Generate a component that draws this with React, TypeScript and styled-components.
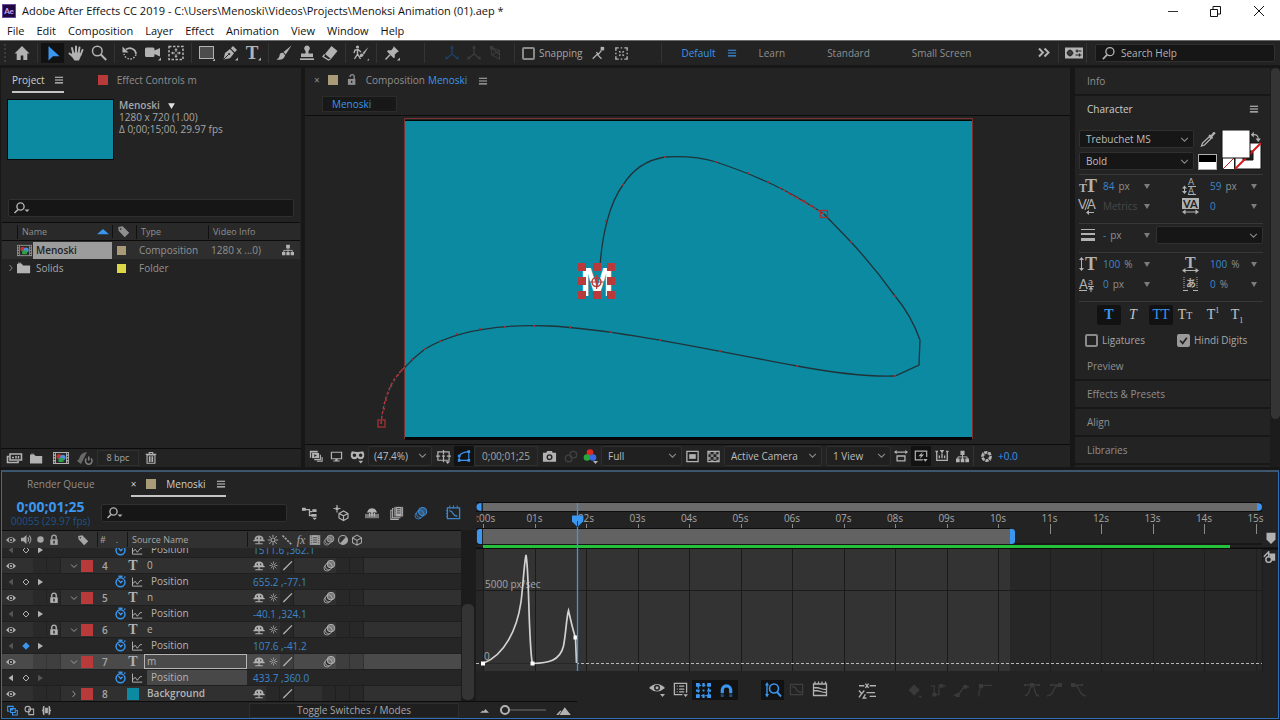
import React from "react";
import styled, { createGlobalStyle } from "styled-components";

const c = {
  panel: "#232323",
  gap: "#171717",
  field: "#161616",
  line: "#0c0c0c",
  border: "#303030",
  text: "#a6a6a6",
  bright: "#cdcdcd",
  dim: "#8f8f8f",
  icon: "#b2b2b2",
  blue: "#3a96ee",
  value: "#3c86cd",
  teal: "#0c8aa1",
  red: "#b93a3a",
  tan: "#a99b78",
};

const GlobalStyle = createGlobalStyle`
  * { box-sizing: border-box; }
  body { margin: 0; background: ${c.gap}; color: ${c.text}; font: 10px/14px "Open Sans", "Noto Sans", sans-serif; }
  button, input, select { font: inherit; color: inherit; margin: 0; padding: 0; border: 0; background: none; border-radius: 0; outline: 0; }
  button { white-space: nowrap; text-align: left; }
  h1, h2, p { margin: 0; font: inherit; white-space: nowrap; }
  table { border-spacing: 0; }
  th, td { padding: 0; font-weight: 400; text-align: left; }
  svg { display: block; flex: none; }
`;

/* ---------- icons ---------- */

const s = { fill: "none", stroke: "currentColor" } as const;
const flyout = <path d="M13 15.500h3v-3z" />;
const down = <path d="M10 13h5l-2.500 3z" />;

const icons: Record<string, React.ReactNode> = {
  home: <path d="M8 1 .5 8.500h2.200V15h4V10.500h2.600V15h4V8.500h2.200z" />,
  arrow: <path d="M3.500 1v14.500l4.500-4.300h6.500z" />,
  hand: (
    <>
      <path {...s} strokeWidth="2" strokeLinecap="round" d="M5.500 9 4 3M8 8V1.500M10.500 8.500 11.500 2.500M12.500 10 14.500 5M4.500 11 1.500 8.500" />
      <path d="M4.300 7.500h7.500l1.600 2.500-2.400 5.500H6.500L3 10.500z" />
    </>
  ),
  zoom: (
    <>
      <circle {...s} strokeWidth="1.500" cx="6.300" cy="6" r="4.800" />
      <path {...s} strokeWidth="2" d="m9.800 9.500 5.400 5.500" />
    </>
  ),
  rotate: (
    <>
      <path {...s} strokeWidth="1.700" d="M4 4.500A6.200 6.200 0 0 1 14 9" />
      <path {...s} strokeWidth="1.500" strokeDasharray="1.500 1.500" d="M14 9.500A6.200 6.200 0 0 1 2 9" />
      <path d="M.5 1.500v6h6z" />
    </>
  ),
  camera: (
    <>
      <path d="M0 4q0-1.500 1.500-1.500H8Q9.500 2.500 9.500 4v1.500L15 3v8.500L9.500 9v1.500Q9.500 12 8 12H1.500Q0 12 0 10.500z" />
      {flyout}
    </>
  ),
  behind: (
    <>
      <rect {...s} strokeWidth="1.500" strokeDasharray="2.500 1.500" x="1" y="1.500" width="14" height="13" />
      <path d="M8 3 6.200 5.200h3.600zM8 13l-1.800-2.200h3.600zM3 8l2.200-1.800v3.600zM13 8l-2.200-1.800v3.600z" />
      <path {...s} d="M8 4v3M8 9v3M4 8h3M9 8h3" />
    </>
  ),
  rect: (
    <>
      <rect x="0.500" y="1.500" width="14" height="12" fill="#4c4c4c" stroke="currentColor" />
      <path d="M13.500 16H16v-2.500z" />
    </>
  ),
  pen: (
    <>
      <path d="M1.500 14.500 3 8 8 4l4 4.300-4 4.900z" />
      <path d="m8.800 3.300 2.200-2.300 4 4-2.300 2.300z" />
      <path d="m1.500 14.500 5-5" stroke="#232323" />
      <circle cx="7.200" cy="9" r="1.100" fill="#232323" />
      {flyout}
    </>
  ),
  type: (
    <>
      <text x="7" y="13.500" textAnchor="middle" fontFamily="Liberation Serif" fontSize="19" fontWeight="700">T</text>
      {flyout}
    </>
  ),
  brush: (
    <>
      <path d="M15.500.5 7.500 7l2.200 2.500z" />
      <path d="M7 7.800Q3.500 7.500 3.500 11 3 13.500.5 14.500q7 1.500 8.700-4.300z" />
    </>
  ),
  stamp: (
    <>
      <path d="M8 .5a2.800 2.800 0 0 1 2 4.800Q9 6.500 9.500 8.500H14V12H2V8.500h4.500Q7 6.500 6 5.300A2.800 2.800 0 0 1 8 .5z" />
      <path d="M1 13.300h14v1.700H1z" />
    </>
  ),
  eraser: (
    <>
      <path d="m9.500 1 6 5-6.500 8L3 9z" />
      <path {...s} strokeWidth="1.300" d="m2.600 9.500-1.600 2L6.500 15l2-1" />
    </>
  ),
  roto: (
    <>
      <circle cx="4.500" cy="2" r="1.600" />
      <path {...s} strokeWidth="1.400" d="M4.500 4v5l-3 5M4.500 9l3 5M1 8l1-3 3-.5L8 7" />
      <path d="M15.500 2 9.500 8l1.500 1.600z" />
      <path d="M9 8.600Q6.500 9 6.600 12q3.900 0 4-2.300zM14 15.500h2v-2z" />
    </>
  ),
  pin: (
    <>
      <path d="m9.500 1 5.500 5.500-1.500.5-2.700 2.500v3.300L9.500 13 3 6.500 4 5.200h3.300L9.500 2.500z" />
      <path {...s} strokeWidth="1.500" d="m6 9.800-4.500 4.700" />
      {flyout}
    </>
  ),
  axis: (
    <>
      <path {...s} strokeWidth="1.300" d="M8 2v7l5 4M8 9l-5 4" />
      <path d="M8 0 6 3.500h4zM1 14.500l1-3.500 2.500 3zM15 14.500l-1-3.500-2.500 3z" />
    </>
  ),
  axisView: (
    <>
      <path {...s} strokeWidth="1.200" d="M3 2l9 8M3 2v8l9 5V5zM12 5 4 10" />
      <path d="M1 0h4v4H1z" />
    </>
  ),
  snapEdge: (
    <>
      <path {...s} strokeWidth="1.500" d="m2 14.500 5-5 5 5M6 7l2.500 2.500L12 5" />
      <path d="M11 1h4v4h-4z" />
    </>
  ),
  snapBox: (
    <path {...s} strokeWidth="1.500" d="M2 5V2h3M11 2h3v3M14 11v3h-3M5 14H2v-3M5.500 5.500 7 7M10.500 5.500 9 7M5.500 10.500 7 9M10.500 10.500 9 9M7.200 2h1.600M7.200 14h1.600M2 7.200v1.600M14 7.200v1.600" />
  ),
  menu: <path {...s} strokeWidth="1.800" d="M1.500 3.500h13M1.500 8h13M1.500 12.500h13" />,
  more: <path {...s} strokeWidth="2" d="m3 3.500 4 4-4 4M8.500 3.500l4 4-4 4" />,
  workspace: (
    <>
      <path d="M-1 2.500h18v11H-1z" />
      <circle cx="4" cy="8" r="2.200" fill="none" stroke="#232323" strokeWidth="1.500" />
      <path fill="none" stroke="#232323" strokeWidth="1.200" d="M4 4.500v7M.5 8h7M9.500 6h6M9.500 10h6M11 4.500v3M13.500 8.500v3" />
    </>
  ),
  help: (
    <>
      <circle {...s} strokeWidth="1.400" cx="9.500" cy="6" r="4.300" />
      <path {...s} strokeWidth="1.700" d="M6.300 9.500 2 14" />
    </>
  ),
  find: (
    <>
      <circle {...s} strokeWidth="1.400" cx="6.500" cy="6.500" r="3.600" />
      <path {...s} strokeWidth="1.600" d="M4 9.500.5 13" />
      <path d="M10.500 9.500h5L13 12z" />
    </>
  ),
  lock: (
    <>
      <path d="M3 7h10v7.500H3z" />
      <path {...s} strokeWidth="1.800" d="M5 7V4.500a3 3 0 0 1 6 0V7" />
      <path d="M7 9h2v3.500H7z" fill="#2a2a2a" />
    </>
  ),
  unlock: (
    <>
      <path d="M2.500 6.500h10v8h-10z" />
      <path {...s} strokeWidth="1.800" d="M5.500 4V3.500a2.700 2.700 0 0 1 5.400 0v3" />
      <path d="M6.800 9h1.600v3H6.800z" fill="#232323" />
    </>
  ),
  tag: <path fillRule="evenodd" d="M1.500 2.500 7 1.500l8 8-5.500 5.500-7.500-8zM4.500 4a1 1 0 1 0 .1 2 1 1 0 0 0-.1-2z" />,
  sort: <path d="M0 11h16L8 4z" />,
  tick: <path {...s} strokeWidth="3" d="m2 8 4.500 5L14 3" />,
  tree: (
    <>
      <path d="M5.500 1h5v5h-5zM0 10.500h4.500V15H0zM5.800 10.500h4.400V15H5.800zM11.500 10.500H16V15h-4.500z" />
      <path {...s} strokeWidth="1.200" d="M8 6v5M2.300 11V8.500h11.400V11" />
    </>
  ),
  comp: (
    <>
      <path d="M0 2h16v12H0z" />
      <path d="M3 3h10v10H3z" fill="#2b2b2b" />
      <path {...s} stroke="#2b2b2b" strokeWidth="1.300" strokeDasharray="1.400 1.400" d="M1.500 3v10M14.500 3v10" />
      <circle cx="6" cy="6.500" r="2.500" fill="#c8322c" />
      <circle cx="9.800" cy="7.500" r="2.700" fill="#4d8fe0" />
      <path d="M5.500 8h5v4h-5z" fill="#2f9f4a" />
    </>
  ),
  folder: <path d="M0 3.500h5.500L7 5h8v9H0zM1 2h4v1H1z" />,
  interpret: (
    <>
      <path {...s} strokeWidth="1.600" d="M4 4h11.500v6H4zM3 6.500H1.500v6H12V11" />
      <path {...s} d="M6 7.500h2M10 6v2.500M12.500 6v2.500" strokeWidth="1.500" />
    </>
  ),
  power: (
    <>
      <path d="M2 9q1-6 8-7L8 6l-4 8L0 11z" opacity=".75" />
      <path {...s} strokeWidth="1.500" d="M9.500 8.500a3.300 3.300 0 1 0 4.500 0M11.800 6.500v4" />
    </>
  ),
  trash: <path {...s} strokeWidth="1.300" d="M3.500 4.500h9V14h-9zM2 3.800h12M6 3.500V1.700h4v1.800M6.200 6v6.500M8 6v6.500M9.800 6v6.500" />,
  previews: (
    <>
      <path d="M1 2h9v2H1zM1 2h1.500v8H1z" />
      <path d="M3.500 4.500h8v6h-8z" />
      <path d="m6 6 3 1.500L6 9z" fill="#232323" />
      <path {...s} strokeWidth="1.300" d="M13 6.500v5.700H6M15 9v5H9" />
    </>
  ),
  monitor: <path fillRule="evenodd" d="M1 2h14v9.500H1zM2.500 3.500V10h11V3.500zM6.500 11.500h3V13H12v1.300H4V13h2.500z" />,
  mask: (
    <>
      <path fillRule="evenodd" d="M2 2.500Q8 4 14 2.500q2 3 1 6Q14 11 11.500 11 9 11 8 9q-1 2-3.500 2T1 8.500q-1-3 1-6zM4.700 4.700a1.900 1.900 0 1 0 .1 3.800 1.900 1.900 0 0 0-.1-3.800zm6.600 0a1.900 1.900 0 1 0 .1 3.800 1.900 1.900 0 0 0-.1-3.800z" />
      <path d="M9 12.500h5l-2.500 3z" />
    </>
  ),
  grid: (
    <>
      <path {...s} strokeWidth="1.300" d="M2 3h12v9H2zM8 1v4.500M8 9v5M0 7.500h4.500M11.500 7.500H16M6.500 7.500h3M8 6v3" />
      {down}
    </>
  ),
  path: (
    <>
      <path {...s} strokeWidth="1.300" d="M2.500 13V8Q5 3.500 13.500 3v10z" />
      <path d="M1 11.500h3v3H1zM12 11.500h3v3h-3zM12 1.500h3v3h-3zM1 6.500h3v3H1z" />
    </>
  ),
  snapshot: <path fillRule="evenodd" d="M1 4h3.500l1-2h5l1 2H15v9.500H1zM8 5.500a3.200 3.200 0 1 0 .1 6.400A3.200 3.200 0 0 0 8 5.500zm0 1.500a1.700 1.700 0 1 1 0 3.400A1.700 1.700 0 0 1 8 7z" />,
  showShot: (
    <>
      <circle {...s} strokeWidth="1.500" cx="6" cy="10" r="3.500" />
      <circle {...s} strokeWidth="1.500" cx="11" cy="6" r="3.500" />
    </>
  ),
  rgb: (
    <>
      <circle cx="7" cy="4.500" r="3.300" fill="#dc2a22" />
      <circle cx="4" cy="9.500" r="3.300" fill="#27a83a" />
      <circle cx="10" cy="9.500" r="3.300" fill="#3a69e0" />
      {down}
    </>
  ),
  region: (
    <>
      <path {...s} strokeWidth="1.400" d="M2 2.500h12v11H2z" />
      <path d="M4.500 5.500h7v5h-7z" />
    </>
  ),
  checker: (
    <>
      <path {...s} strokeWidth="1.200" d="M2 2.500h12v11H2z" />
      <path d="M2 2.500h3v3H2zM8 2.500h3v3H8zM5 5.500h3v3H5zM11 5.500h3v3h-3zM2 8.500h3v3H2zM8 8.500h3v3H8zM5 11.500h3v2H5zM11 11.500h3v2h-3z" opacity=".7" />
    </>
  ),
  pixelAspect: (
    <>
      <path {...s} strokeWidth="1.500" d="M3.500 8h9v5.500h-9zM1.500 3.500h13" />
      <path d="M3 1v5L0 3.500zM13 1v5l3-2.500z" />
    </>
  ),
  fast: (
    <>
      <path {...s} strokeWidth="1.400" d="M10 12.500H1.500v-10h13V9" />
      <path d="M10 3 5 8.300h3L6.500 11.500l5-5.300h-3z" />
      <path d="M10.500 11.500h5l-2.500 3z" />
    </>
  ),
  timelineBtn: (
    <>
      <path {...s} strokeWidth="1.500" d="M2 3v10h12V3M5 7.500v3M8 5v5.500M11 7.500v3" />
      <path d="M5.500 1h5L8 5zM.5 2h3v1.500h-3zM12.500 2h3v1.500h-3z" />
    </>
  ),
  shutter: (
    <>
      <circle {...s} strokeWidth="3.300" strokeDasharray="4 1" cx="8" cy="8" r="5" />
      <path {...s} d="M3 3l3 4M13 3 9 5M13 13l-3-4" />
    </>
  ),
  swap: (
    <>
      <path {...s} strokeWidth="1.500" d="M4 5q7-1 7 6" />
      <path d="M5 1v7.500L1 5zM7.500 10h7L11 14.500z" />
    </>
  ),
  dropper: (
    <>
      <path d="M10 6 8.500 4.500l1-1L11 4l2.500-3q2-.5 2 1.500L12.500 5.500l.5 1.500-1 1z" />
      <path {...s} strokeWidth="1.300" d="M9.500 5.500 2.500 12l-1 3 3-1L11 7.500z" />
    </>
  ),
  flow: (
    <>
      <path {...s} strokeWidth="1.400" d="M0 5h7M4 5h4v7M8 7h3M8 11h3" />
      <path d="M0 3h4v3H0zM11 4.500h4.500v3H11zM10 9.500h5.500v3H10z" />
      <path d="M11 13.500h5L13.500 16z" />
    </>
  ),
  draft: (
    <>
      <path {...s} strokeWidth="1.200" d="M6 8.500 10.500 6l4.500 2.500V13l-4.500 2.500L6 13zM6 8.500l4.500 2.300L15 8.500M10.500 10.800V15M4 0v2M4 5.500v2M.5 3.500h2M5.500 3.500h2" />
      <circle cx="4" cy="3.700" r="1.700" />
    </>
  ),
  shy: (
    <>
      <path fillRule="evenodd" d="M2 7q.5-5 6-5t6 5v1h1.500v1.500H.5V8H2zM5 4.500h1.500V7H5zM9.500 4.500H11V7H9.500z" />
      <path d="M7.200 9h1.600v4H7.200zM3 12.300h10v1.500H3z" />
    </>
  ),
  shyMaster: (
    <>
      <path d="M3 6q1-3.500 5-3.500T13 6l1 1.500H2z" />
      <path d="M0 9h16v5H0z" opacity=".6" />
      <path d="M7 6h2v6H7zM4.500 8h1.500v4H4.500zM10 8h1.500v4H10z" />
    </>
  ),
  blend: (
    <>
      <path d="M5 1h10v11H5z" />
      <path {...s} strokeWidth="1.200" d="M4 3H3v10.500h9M2 5H1v10.300h9" />
      <path {...s} stroke="#2a2a2a" strokeDasharray="1.300 1" d="M6.500 1.500v10M13.500 1.500v10" />
      <path d="M8 3h4M8 5.500h4M8 8h4" stroke="#2a2a2a" />
    </>
  ),
  motion: (
    <>
      <circle {...s} cx="5" cy="11" r="3.800" />
      <circle {...s} cx="7" cy="9" r="4.200" fill="#2a2a2a" />
      <circle {...s} cx="9.800" cy="6.300" r="4.700" fill="currentColor" fillOpacity=".55" strokeWidth="1.200" />
    </>
  ),
  graph: (
    <>
      <path {...s} strokeWidth="1.400" d="M1.500 3h13v11.500h-13zM3.500 6q3 .5 4 3t4.500 3" />
      <path {...s} d="M4 .5v3M8 .5v3M12 .5v3M0 6h2M0 9h2M0 12h2" />
    </>
  ),
  eye: (
    <>
      <path d="M0 8Q8-1.500 16 8 8 17.500 0 8z" />
      <circle cx="8" cy="8" r="3.600" fill="#282828" />
      <circle cx="8" cy="8" r="1.800" />
    </>
  ),
  eyeDrop: (
    <>
      <path d="M0 7Q8-1 16 7 8 14 0 7z" />
      <circle cx="8" cy="6.800" r="3" fill="#232323" />
      <circle cx="8" cy="6.800" r="1.500" />
      <path d="M11 13h5l-2.500 3z" />
    </>
  ),
  audio: (
    <>
      <path d="M0 5.500h3.500L8 1.500v13l-4.500-4H0z" />
      <path {...s} strokeWidth="1.500" d="M10 5q2.500 3 0 6M12 2.500q5 5.500 0 11" />
    </>
  ),
  solo: <circle cx="8" cy="8" r="4.700" />,
  sun: (
    <>
      <circle {...s} strokeWidth="1.500" cx="8" cy="8" r="2.700" />
      <path {...s} strokeWidth="1.400" d="M8 1v3M8 12v3M1 8h3M12 8h3M3 3l2 2M11 11l2 2M13 3l-2 2M5 11l-2 2" />
    </>
  ),
  quality: <path {...s} strokeWidth="2.200" strokeDasharray="3 1.500" d="m2 2 12 12" />,
  slash: <path {...s} strokeWidth="2" d="M2 14.500 14.500 2" />,
  fx: <text x="8" y="13" textAnchor="middle" fontFamily="Liberation Serif" fontStyle="italic" fontSize="16">fx</text>,
  film: (
    <>
      <path d="M1 1.500h14v13H1z" />
      <path {...s} stroke="#303030" strokeDasharray="1.500 1.500" d="M3 2v12M13 2v12" />
      <path d="M5 5h6M5 8h6M5 11h6" stroke="#303030" />
    </>
  ),
  adjust: (
    <>
      <circle {...s} strokeWidth="1.500" cx="8" cy="8" r="6" />
      <path d="M12 3.500A6 6 0 0 1 4 12.500z" />
    </>
  ),
  cube: <path {...s} strokeWidth="1.400" d="M2 5l6-3.500L14 5v6.500L8 15l-6-3.500zM2 5l6 3.500L14 5M8 8.500V15" />,
  watch: (
    <>
      <circle {...s} strokeWidth="1.800" cx="8" cy="9" r="5.500" />
      <path {...s} strokeWidth="1.700" d="m5.500 6.500 3 3 2-2.500M5.500 1.500h5M12.500 3.500l1.500-1.500" />
    </>
  ),
  plot: <path {...s} strokeWidth="1.300" d="M2 2v11.500h13M3 10q2.500-5 4-1t3 0Q12 5 14.500 6" />,
  right: <path {...s} strokeWidth="1.800" d="m5 2 5.500 6L5 14" />,
  chevron: <path {...s} strokeWidth="1.800" d="m2 5 6 6 6-6" />,
  prev: <path d="M12 1.500v13L3 8z" />,
  next: <path d="M4 1.500v13L14 8z" />,
  key: <path {...s} strokeWidth="2" d="m8 2 6 6-6 6-6-6z" />,
  keyOn: <path d="m8 .5 7.500 7.500L8 15.500.5 8z" />,
  triangle: <path d="M2 4h12L8 14z" />,
  toggleA: (
    <>
      <path {...s} strokeWidth="1.500" d="M5 5h7v6H5zM3.500 9H1V2h8v2M8 11v3.500h7V8h-2" />
      <path d="M5 5h4v3H5z" />
    </>
  ),
  toggleB: (
    <>
      <circle {...s} strokeWidth="1.500" cx="5.500" cy="6" r="4" />
      <path {...s} strokeWidth="1.500" d="M7 6h7v8H7z" />
    </>
  ),
  toggleC: <path d="M5 1v14Q2.500 15 2.500 12V9.500L1 8l1.500-1.500V4Q2.500 1 5 1zM11 1v14q2.500 0 2.500-3V9.500L15 8l-1.500-1.500V4Q13.500 1 11 1zM6 4h4v8H6z" />,
  hillS: <path d="M0 12 5 8l2 1.500L9.500 5.500 16 12z" />,
  hillL: <path d="M-1 13.500 4 8l1.500.5-3.500 5zM3 13.500 9.500 4 17 13.500z" />,
  list: (
    <>
      <path {...s} strokeWidth="1.400" d="M10 13.500H1.500v-12h13v10" />
      <path {...s} strokeWidth="1.300" d="M4 4.500h1M6.500 4.500H12M4 7.500h1M6.500 7.500H12M4 10.500h1M6.500 10.500H12" />
      <path d="M11 13h5l-2.500 3z" />
    </>
  ),
  box: (
    <>
      <path {...s} strokeWidth="1.300" strokeDasharray="3 1.500" d="M2.500 2.500h11v11h-11z" />
      <path d="M0 0h4v4H0zM12 0h4v4h-4zM0 12h4v4H0zM12 12h4v4h-4zM6.800 0h2.400v4H6.800zM6.800 12h2.400v4H6.800zM0 6.800h4v2.400H0zM12 6.800h4v2.400h-4zM7 7h2v2H7z" />
    </>
  ),
  magnet: (
    <>
      <path {...s} strokeWidth="3.400" d="M3.500 11V7.500a4.500 4.500 0 0 1 9 0V11" />
      <path d="M1.800 12h3.400v3H1.800zM10.800 12h3.400v3h-3.400z" opacity=".45" />
    </>
  ),
  fit: (
    <>
      <circle {...s} strokeWidth="1.600" cx="9" cy="6.500" r="4.500" />
      <path {...s} strokeWidth="1.900" d="m12 10 4 4.500" />
      <path {...s} strokeWidth="1.400" d="M2 2v11" />
      <path d="M2 0 0 3.500h4zM2 15.500 0 12h4z" />
    </>
  ),
  fitSel: <path {...s} strokeWidth="1.300" d="M1.500 2.500h13v11h-13zM3 5q4 0 5 3t6 3" />,
  zoomFit: <path {...s} strokeWidth="1.300" d="M1.500 3h13v11.500h-13zM1.500 6.500q5 0 7 1t6 1M1.500 9.500q5 0 7 1t6 1M3 .5V3M6.500.5V3M10 .5V3M13.500.5V3" />,
  separate: (
    <>
      <path {...s} strokeWidth="1.300" d="M0 3.500h5M10 3.500h6M6 1.500l3 4M9 1.500l-3 4M7 10h8M10 13.500h6" />
      <path {...s} strokeWidth="1.300" d="m0 8 2.500 3L5 8M2.500 11 0 14.500M6 11.500l-2 3.500h3" />
    </>
  ),
  keyMenu: <path d="m6.500 1.500 6 6-6 6-6-6zM11 13.500h4L13 16z" />,
  hold: (
    <>
      <path {...s} strokeWidth="1.300" d="M0 3h3.500v9.500h5V3H16" />
      <path d="M1.500 10.500h4v4h-4zM9 1h4v4H9z" />
    </>
  ),
  linear: (
    <>
      <path {...s} strokeWidth="1.500" d="M0 13h4l7-9h5" />
      <path d="M2 11h4v4H2zM10 2h4v4h-4z" />
    </>
  ),
  bezier: (
    <>
      <path {...s} strokeWidth="1.300" d="M2 14.500Q2 3 8 2.500h8" />
      <path d="M2 1h4.500v4.500H2z" />
    </>
  ),
  ease: (
    <>
      <path {...s} strokeWidth="1.300" d="M0 3h16M1 13.500q3 0 4-4T8 4q2 0 3 5t4 5" />
      <path d="M6 1h4v4H6zM0 2h2v2H0zM14 2h2v2h-2z" />
    </>
  ),
  easeIn: (
    <>
      <path {...s} strokeWidth="1.300" d="M4 3h9M0 14q5-1 6.500-5.500T12 3" />
      <path d="M11 1h4v4h-4zM3 2h2v2H3z" />
    </>
  ),
  easeOut: (
    <>
      <path {...s} strokeWidth="1.300" d="M3 3h9M4 3q4 1 5.500 5.500T16 14" />
      <path d="M1 1h4v4H1zM11 2h2v2h-2z" />
    </>
  ),
  flag: <path d="M2 1h12v9l-6 6-6-6z" />,
  bin: (
    <>
      <path {...s} strokeWidth="1.800" d="m1 7 6-6v5" />
      <path d="M7 3h8v9h-4z" />
      <circle cx="7" cy="10.500" r="3.500" fill="#232323" stroke="currentColor" strokeWidth="1.800" />
    </>
  ),
};

const Icon = ({ name, size = 16 }: { name: string; size?: number }) => (
  <svg width={size} height={size} viewBox="0 0 16 16" fill="currentColor" overflow="visible" aria-hidden="true">
    {icons[name]}
  </svg>
);

/* ---------- shared parts ---------- */

const Page = styled.div`
  min-height: 100vh;
  display: flex;
  flex-direction: column;
`;

const IconButton = styled.button<{ $w?: number; $h?: number; $color?: string; $on?: boolean }>`
  width: ${(p) => p.$w ?? 20}px;
  height: ${(p) => p.$h ?? 18}px;
  flex: none;
  display: flex;
  align-items: center;
  justify-content: center;
  color: ${(p) => p.$color ?? c.icon};
  background: ${(p) => (p.$on ? "#121212" : "none")};
`;

const Swatch = styled.span<{ $color: string; $size?: number }>`
  flex: none;
  width: ${(p) => p.$size ?? 10}px;
  height: ${(p) => p.$size ?? 10}px;
  background: ${(p) => p.$color};
`;

const SearchField = styled.label<{ $w?: string }>`
  display: flex;
  align-items: center;
  gap: 5px;
  height: 18px;
  width: ${(p) => p.$w ?? "auto"};
  padding: 0 5px;
  background: ${c.field};
  border: 1px solid ${c.border};
  border-radius: 2px;
  color: ${c.icon};
  input { flex: 1; min-width: 0; }
  input::placeholder { color: #b4b4b4; opacity: 1; }
`;

const ProjectSearch = styled(SearchField)`
  margin: 0 7px;
`;

const SelectBox = styled.label<{ $w?: number; $dark?: boolean; $pad?: number }>`
  position: relative;
  display: block;
  flex: none;
  height: ${(p) => (p.$dark ? 18 : 20)}px;
  width: ${(p) => (p.$w ? `${p.$w}px` : "100%")};
  border: 1px solid ${c.border};
  border-radius: 2px;
  background: ${(p) => (p.$dark ? c.field : "#202020")};
  color: #bdbdbd;
  select { appearance: none; width: 100%; height: 100%; padding-left: ${(p) => p.$pad ?? 5}px; }
  svg { position: absolute; right: 4px; top: 4px; pointer-events: none; color: #8c8c8c; }
`;

const Select = ({ label, value, w, dark, pad }: { label: string; value: string; w?: number; dark?: boolean; pad?: number }) => (
  <SelectBox $w={w} $dark={dark} $pad={pad}>
    <select aria-label={label}>
      <option>{value}</option>
    </select>
    <Icon name="chevron" size={9} />
  </SelectBox>
);

const Check = styled.label`
  display: flex;
  align-items: center;
  gap: 4px;
  input {
    appearance: none;
    width: 13px;
    height: 13px;
    border: 2px solid #8a8a8a;
    border-radius: 2px;
  }
  input:checked { background: #9a9a9a; border-color: #9a9a9a; }
  span { position: relative; display: flex; }
  svg { position: absolute; left: 2px; top: 2px; color: #222; pointer-events: none; }
`;

/* ---------- window chrome ---------- */

const Chrome = styled.header`
  background: #fff;
  color: #111;
  font-size: 11px;
  height: 41px;
  border-bottom: 1px solid #6a6a6a;
`;

const TitleBar = styled.div`
  display: flex;
  align-items: center;
  height: 22px;
  padding-left: 2px;
  gap: 6px;
  h1 { flex: 1; }
`;

const Logo = styled.span`
  width: 14px;
  height: 14px;
  background: #1f0740;
  border: 1px solid #6a4a9c;
  color: #c9a4ff;
  font: 700 8px/12px Lato, sans-serif;
  text-align: center;
`;

const WindowButtons = styled.div`
  display: flex;
`;

const WindowButton = styled.button`
  width: 43px;
  height: 20px;
  display: flex;
  align-items: center;
  justify-content: center;
`;

const MenuBar = styled.nav`
  display: flex;
  gap: 12px;
  padding: 2px 7px;
`;

const ToolRow = styled.div`
  display: flex;
  align-items: center;
  height: 24px;
  padding: 0 5px 0 4px;
  background: ${c.panel};
`;

const Grip = styled.span`
  width: 6px;
  height: 18px;
  border-left: 2px dotted #3c3c3c;
`;

const Divider = styled.span<{ $l?: number; $r?: number }>`
  flex: none;
  width: 1px;
  height: 20px;
  background: #343434;
  margin: 0 ${(p) => p.$r ?? 3}px 0 ${(p) => p.$l ?? 4}px;
`;

const Workspaces = styled.div`
  display: flex;
  flex: 1;
  padding-left: 20px;
`;

const Workspace = styled.button<{ $on?: boolean }>`
  display: flex;
  align-items: center;
  gap: 11px;
  margin-right: ${(p) => (p.$on ? 22 : 42)}px;
  color: ${(p) => (p.$on ? c.blue : c.dim)};
`;

const tools: string[][] = [
  ["home"],
  ["arrow", "hand", "zoom"],
  ["rotate", "camera", "behind"],
  ["rect", "pen", "type"],
  ["brush", "stamp", "eraser"],
  ["roto"],
  ["pin"],
];

const Tools = () => (
  <ToolRow role="toolbar">
    <Grip />
    {tools.map((group, i) => (
      <React.Fragment key={i}>
        {i > 0 && <Divider />}
        {group.map((t) => (
          <IconButton key={t} $w={23} $h={20} $on={t === "arrow"} $color={t === "arrow" ? c.blue : undefined} aria-label={t}>
            <Icon name={t} />
          </IconButton>
        ))}
      </React.Fragment>
    ))}
    <Divider $l={21} $r={16} />
    <IconButton $w={22} $h={20} $color="#1d4166" aria-label="Local axis"><Icon name="axis" /></IconButton>
    <IconButton $w={22} $h={20} $color="#3c3c3c" aria-label="World axis"><Icon name="axis" /></IconButton>
    <IconButton $w={22} $h={20} $color="#3c3c3c" aria-label="View axis"><Icon name="axisView" size={14} /></IconButton>
    <Divider $l={7} $r={7} />
    <Check><input type="checkbox" />Snapping</Check>
    <IconButton $w={30} aria-label="Snap to edges"><Icon name="snapEdge" size={14} /></IconButton>
    <IconButton $w={18} aria-label="Snap inside"><Icon name="snapBox" size={15} /></IconButton>
    <Divider $l={30} $r={0} />
    <Workspaces>
      <Workspace $on>Default<Icon name="menu" size={10} /></Workspace>
      <Workspace>Learn</Workspace>
      <Workspace>Standard</Workspace>
      <Workspace>Small Screen</Workspace>
    </Workspaces>
    <IconButton aria-label="More workspaces"><Icon name="more" /></IconButton>
    <Divider $l={4} $r={3} />
    <IconButton $w={24} aria-label="Sync settings"><Icon name="workspace" /></IconButton>
    <Divider $l={0} $r={8} />
    <SearchField $w="180px">
      <Icon name="help" size={15} />
      <input placeholder="Search Help" aria-label="Search Help" />
    </SearchField>
  </ToolRow>
);

/* ---------- project panel ---------- */

const Main = styled.main`
  flex: 1;
  display: flex;
  gap: 4px;
  padding: 3px 0 3px 1px;
`;

const Panel = styled.section`
  display: flex;
  flex-direction: column;
  background: ${c.panel};
`;

const TabRow = styled.div<{ $h?: number; $pad?: number }>`
  display: flex;
  align-items: center;
  height: ${(p) => p.$h ?? 26}px;
  padding-left: ${(p) => p.$pad ?? 11}px;
`;

const Tab = styled.button<{ $on?: boolean; $ml?: number; $gap?: number }>`
  display: flex;
  align-items: center;
  gap: ${(p) => p.$gap ?? 9}px;
  height: 24px;
  margin-left: ${(p) => p.$ml ?? 0}px;
  border-bottom: 2px solid ${(p) => (p.$on ? "#c4c4c4" : "transparent")};
  color: ${(p) => (p.$on ? c.bright : c.dim)};
  em { font-style: normal; color: ${c.blue}; margin-left: -5px; }
`;

const ProjectPanel = styled(Panel)`
  width: 300px;
  flex: none;
`;

const Preview = styled.div`
  display: flex;
  gap: 5px;
  padding: 5px 6px 0;
  height: 105px;
  line-height: 12px;
`;

const Thumb = styled.div`
  width: 107px;
  height: 61px;
  background: ${c.teal};
  border: 1px solid #0b0b0b;
`;

const AssetName = styled.button`
  display: flex;
  align-items: center;
  gap: 7px;
  font-weight: 600;
  svg { color: #e0e0e0; }
`;

const AssetTable = styled.table`
  display: block;
  margin: 5px 1px 0;
  border-top: 1px solid ${c.line};
  thead, tbody { display: block; }
`;

const AssetRow = styled.tr<{ $head?: boolean; $sel?: boolean }>`
  display: grid;
  grid-template-columns: 15px 16px 79px 24px 72px 1fr 18px;
  align-items: center;
  height: 18px;
  background: ${(p) => (p.$head ? "#292929" : p.$sel ? "#2e2e2e" : "none")};
  border-bottom: ${(p) => (p.$head ? `1px solid ${c.line}` : "0")};
  color: ${(p) => (p.$head ? "#8f8f8f" : "#929292")};
  font-size: ${(p) => (p.$head ? 9 : 10)}px;
  th + th { border-left: 1px solid #111; padding-left: 4px; }
  th, td { display: flex; align-items: center; justify-content: space-between; }
`;

const NameCell = styled.td<{ $sel?: boolean }>`
  height: 17px;
  padding-left: 3px;
  background: ${(p) => (p.$sel ? "#9c9c9c" : "none")};
  color: ${(p) => (p.$sel ? "#222" : c.text)};
  font-weight: ${(p) => (p.$sel ? 600 : 400)};
`;

const Wide = styled.th`
  grid-column: span 2;
`;

const SortMark = styled.span`
  padding-right: 3px;
  color: ${c.blue};
`;

const SwatchCell = styled.td`
  padding-left: 5px;
`;

const InfoCell = styled.td`
  padding-left: 3px;
`;

const TreeCell = styled.td`
  color: ${c.icon};
`;

const PanelFooter = styled.footer`
  display: flex;
  align-items: center;
  height: 19px;
  margin-top: auto;
  padding-left: 1px;
  border-top: 1px solid ${c.line};
`;

const Depth = styled.button`
  width: 42px;
  height: 16px;
  margin: 0 1px;
  border: 1px solid ${c.border};
  font-size: 9px;
  line-height: 14px;
  text-align: center;
`;

const Project = () => (
  <ProjectPanel>
    <TabRow>
      <Tab $on>Project<Icon name="menu" size={10} /></Tab>
      <Tab $ml={34}><Swatch $color={c.red} />Effect Controls m</Tab>
    </TabRow>
    <Preview>
      <Thumb />
      <div>
        <AssetName>Menoski<Icon name="triangle" size={9} /></AssetName>
        <p>1280 x 720 (1.00)</p>
        <p>Δ 0;00;15;00, 29.97 fps</p>
      </div>
    </Preview>
    <ProjectSearch>
      <Icon name="find" size={16} />
      <input aria-label="Search project" />
    </ProjectSearch>
    <AssetTable>
      <thead>
        <AssetRow $head>
          <th />
          <Wide>Name <SortMark><Icon name="sort" size={12} /></SortMark></Wide>
          <th><Icon name="tag" size={13} /></th>
          <th>Type</th>
          <th>Video Info</th>
          <th />
        </AssetRow>
      </thead>
      <tbody>
        <AssetRow $sel>
          <td />
          <td><Icon name="comp" size={15} /></td>
          <NameCell $sel>Menoski</NameCell>
          <SwatchCell><Swatch $color={c.tan} $size={9} /></SwatchCell>
          <InfoCell>Composition</InfoCell>
          <InfoCell>1280 x ...0)</InfoCell>
          <TreeCell><Icon name="tree" size={12} /></TreeCell>
        </AssetRow>
        <AssetRow>
          <SwatchCell><Icon name="right" size={8} /></SwatchCell>
          <TreeCell><Icon name="folder" size={14} /></TreeCell>
          <NameCell>Solids</NameCell>
          <SwatchCell><Swatch $color="#ddd645" $size={9} /></SwatchCell>
          <InfoCell>Folder</InfoCell>
          <td />
          <td />
        </AssetRow>
      </tbody>
    </AssetTable>
    <PanelFooter>
      <IconButton $w={23} aria-label="Interpret footage"><Icon name="interpret" /></IconButton>
      <IconButton $w={23} aria-label="New folder"><Icon name="folder" size={13} /></IconButton>
      <IconButton $w={25} aria-label="New composition"><Icon name="comp" /></IconButton>
      <IconButton $w={23} $color="#808080" aria-label="Acceleration"><Icon name="power" /></IconButton>
      <Depth>8 bpc</Depth>
      <IconButton $w={22} aria-label="Delete"><Icon name="trash" size={14} /></IconButton>
    </PanelFooter>
  </ProjectPanel>
);

/* ---------- composition viewer ---------- */

const CompPanel = styled(Panel)`
  flex: 1;
  min-width: 0;
`;

const Crumbs = styled.div`
  height: 23px;
  padding: 3px 17px 0;
  border-bottom: 1px solid ${c.line};
`;

const Crumb = styled.button`
  display: block;
  width: 75px;
  height: 16px;
  padding-left: 9px;
  background: #181818;
  border: 1px solid #2b2b2b;
  color: ${c.blue};
  line-height: 14px;
`;

const Viewer = styled.svg`
  width: 100%;
  flex: 1;
  min-height: 300px;
`;

const ViewerFooter = styled.footer`
  display: flex;
  align-items: center;
  height: 23px;
  padding-left: 1px;
  border-top: 1px solid ${c.line};
`;

const TimeBox = styled.button`
  width: 64px;
  height: 20px;
  border: 1px solid ${c.border};
  text-align: center;
`;

const Exposure = styled.button`
  color: ${c.blue};
`;

const Gap = styled.span`
  width: 4px;
`;

const dots = [[384, 410], [386, 401], [388, 394], [391, 387], [394, 381], [398, 376], [402, 371], [412, 360], [425, 350], [440, 342], [457, 335], [480, 330], [505, 328], [534, 327], [570, 328], [611, 333], [660, 341], [720, 352], [797, 367], [895, 377], [895, 297], [851, 243], [812, 207], [804, 202], [797, 198], [790, 195], [780, 189], [768, 183], [748, 174], [716, 163], [665, 158], [623, 186], [606, 222]];
const handles = [[582, 268], [597, 268], [611, 268], [582, 282], [611, 282], [582, 296], [597, 296], [611, 296]];

const Composition = () => (
  <CompPanel>
    <TabRow $h={25} $pad={9}>
      <Tab $gap={8}>×<Swatch $color={c.tan} /><Icon name="unlock" size={12} />Composition <em>Menoski</em></Tab>
      <IconButton $w={32} aria-label="Panel menu"><Icon name="menu" size={10} /></IconButton>
    </TabRow>
    <Crumbs><Crumb>Menoski</Crumb></Crumbs>
    <Viewer viewBox="305 117 765 328" aria-label="Motion path preview">
      <rect x="405" y="121" width="567" height="320" fill="#050505" />
      <rect x="405" y="122" width="567" height="316" fill={c.teal} />
      <path d="M404.500 440V119.500H972.500V440" fill="none" stroke="#7c3030" />
      <path
        d="M381 425C384 395 396 372 425 350C455 332 500 325 550 327C620 331 700 349 797 367C835 374 870 378 895 377L919 366 920 341C914 324 906 310 895 297C880 276 865 258 851 243L824 215C800 199 770 181 716 163C700 158 685 157 665 158C640 162 628 178 623 186C610 203 602 235 600 268"
        fill="none"
        stroke="#20333a"
        strokeWidth="1.300"
      />
      <path d="M381 425C384 395 392 380 405 368M783 191L824 215" fill="none" stroke="#b33b3d" strokeWidth="1.300" strokeDasharray="3 2" />
      {dots.map(([x, y]) => (
        <rect key={`${x}-${y}`} x={x - 1} y={y - 1} width="2" height="2" fill="#8c3437" />
      ))}
      <g fill="none" stroke="#a33034" strokeWidth="1.300">
        <rect x="378" y="421" width="7" height="7" />
        <rect x="820.500" y="211.500" width="7" height="7" />
      </g>
      <text x="597" y="297" textAnchor="middle" fill="#fff" fontFamily="Liberation Sans" fontWeight="700" fontSize="40">M</text>
      <g fill={c.red}>
        {handles.map(([x, y]) => <rect key={`${x}-${y}`} x={x - 4} y={y - 4} width="8" height="8" />)}
      </g>
      <circle cx="596.500" cy="283" r="4.500" fill="none" stroke={c.red} strokeWidth="1.500" />
      <path d="M589 283h15M596.500 276v14" stroke={c.red} />
    </Viewer>
    <ViewerFooter>
      <IconButton aria-label="Always preview"><Icon name="previews" size={14} /></IconButton>
      <IconButton aria-label="Primary viewer"><Icon name="monitor" size={13} /></IconButton>
      <IconButton $w={22} aria-label="Mask view"><Icon name="mask" size={15} /></IconButton>
      <Select label="Magnification" value="(47.4%)" w={64} />
      <IconButton $w={22} aria-label="Guides"><Icon name="grid" size={15} /></IconButton>
      <IconButton $h={20} $on $color={c.blue} aria-label="Mask path visibility"><Icon name="path" size={14} /></IconButton>
      <TimeBox>0;00;01;25</TimeBox>
      <IconButton $w={22} aria-label="Snapshot"><Icon name="snapshot" size={15} /></IconButton>
      <IconButton $color="#404040" aria-label="Show snapshot"><Icon name="showShot" size={15} /></IconButton>
      <IconButton $w={21} aria-label="Channels"><Icon name="rgb" /></IconButton>
      <Select label="Resolution" value="Full" w={81} pad={6} />
      <IconButton aria-label="Region of interest"><Icon name="region" size={15} /></IconButton>
      <IconButton $w={22} aria-label="Transparency grid"><Icon name="checker" size={15} /></IconButton>
      <Select label="Camera" value="Active Camera" w={98} pad={6} />
      <Gap />
      <Select label="View layout" value="1 View" w={65} pad={6} />
      <IconButton aria-label="Pixel aspect"><Icon name="pixelAspect" size={14} /></IconButton>
      <IconButton $h={20} $on aria-label="Fast previews"><Icon name="fast" size={14} /></IconButton>
      <IconButton $w={21} aria-label="Timeline"><Icon name="timelineBtn" size={14} /></IconButton>
      <IconButton aria-label="Flowchart"><Icon name="tree" size={13} /></IconButton>
      <Divider $l={1} $r={0} />
      <IconButton $w={24} aria-label="Reset exposure"><Icon name="shutter" size={13} /></IconButton>
      <Exposure>+0.0</Exposure>
    </ViewerFooter>
  </CompPanel>
);

/* ---------- side panels ---------- */

const Side = styled.aside`
  display: flex;
  width: 205px;
  flex: none;
  margin-left: 1px;
  background: ${c.panel};
`;

const SideBody = styled.div`
  flex: 1;
  display: flex;
  flex-direction: column;
`;

const ScrollTrack = styled.div<{ $w: number }>`
  width: ${(p) => p.$w}px;
  flex: none;
  display: flex;
  flex-direction: column;
  padding: 0 2px 0 1px;
  background: #1c1c1c;
`;

const Thumbbar = styled.div<{ $top?: string; $h: string }>`
  margin-top: ${(p) => p.$top ?? "0"};
  height: ${(p) => p.$h};
  border-radius: 5px;
  background: #343434;
`;

const SideTitle = styled.h2<{ $on?: boolean }>`
  display: flex;
  align-items: center;
  justify-content: space-between;
  height: ${(p) => (p.$on ? 26 : 28)}px;
  padding: 0 11px 0 12px;
  color: ${(p) => (p.$on ? c.bright : c.dim)};
  border-bottom: ${(p) => (p.$on ? "0" : `2px solid ${c.gap}`)};
`;

const CharBody = styled.div`
  padding: 8px 7px 1px 4px;
`;

const FontRow = styled.div`
  display: flex;
  gap: 3px;
  padding-bottom: 4px;
  border-bottom: 1px solid #383838;
`;

const FontSelects = styled.div`
  width: 115px;
  display: grid;
  gap: 4px;
`;

const PaintColumn = styled.div`
  width: 21px;
  display: grid;
  justify-items: center;
  align-content: space-between;
`;

const Mono = styled.span`
  width: 19px;
  height: 16px;
  border: 1px solid #b0b0b0;
  background: linear-gradient(#000 0 50%, #fff 50%);
`;

const CharRow = styled.div`
  display: flex;
  justify-content: space-between;
  align-items: center;
  height: 20px;
`;

const CharGroup = styled.div`
  padding: 1px 0 7px;
  border-bottom: 1px solid #383838;
`;

const Field = styled.div<{ $wide?: boolean }>`
  display: grid;
  grid-template-columns: ${(p) => (p.$wide ? 28 : 24)}px 38px 12px;
  align-items: center;
  margin-right: ${(p) => (p.$wide ? 3 : 0)}px;
  > span { display: flex; gap: 4px; color: ${c.dim}; }
`;

const Value = styled.button<{ $off?: boolean }>`
  color: ${(p) => (p.$off ? "#484848" : c.value)};
`;

const StyleRow = styled.div`
  display: flex;
  align-items: center;
  height: 26px;
  padding-left: 18px;
`;

const StyleButton = styled.button<{ $on?: boolean; $i?: boolean; $b?: boolean; $ml?: number }>`
  width: 24px;
  height: 20px;
  margin-left: ${(p) => p.$ml ?? 0}px;
  border-radius: 2px;
  background: ${(p) => (p.$on ? "#121212" : "none")};
  color: ${(p) => (p.$on ? c.blue : "#c4c4c4")};
  font: ${(p) => (p.$i ? "italic " : "")}${(p) => (p.$b ? 900 : 400)} 14px/20px "Liberation Serif", serif;
  text-align: center;
  small { font-size: 10px; }
  sup, sub { font-size: 8px; line-height: 0; }
`;

const CheckRow = styled.div`
  display: grid;
  grid-template-columns: 92px 1fr;
  height: 24px;
  padding: 0 0 0 6px;
  align-items: center;
`;

const glyph = (body: React.ReactNode) => (
  <svg width="18" height="16" viewBox="0 0 18 16" fill={c.icon} overflow="visible" fontFamily="Liberation Serif" fontWeight="700">{body}</svg>
);

const charIcons = {
  size: glyph(<><text x="0" y="14" fontSize="12">T</text><text x="6" y="14" fontSize="18">T</text></>),
  leading: glyph(<g fontFamily="Lato" fontWeight="400"><text x="6" y="7" fontSize="9">A</text><text x="6" y="16" fontSize="9">A</text><path d="M6 8.500h8M6 16.500h8M2.500 8v7" stroke={c.icon} /><path d="M0 10.500 2.500 7.500 5 10.500zM0 13l2.500 3L5 13z" /></g>),
  kern: glyph(<g fontFamily="Lato" fontWeight="400"><text x="-1" y="11" fontSize="13">V</text><text x="8" y="11" fontSize="13">A</text><path d="M6 12 10 1M9 14.500h6" stroke={c.icon} /><path d="M10 12v5l-3-2.500z" /></g>),
  track: glyph(<g fontFamily="Lato"><path d="M0 0h17v11H0z" /><text x="1" y="10" fontSize="11" fill="#222">VA</text><path d="M2 14h13" stroke={c.icon} /><path d="M3.500 11.500v5L0 14zM13.500 11.500v5L17 14z" /></g>),
  stroke: glyph(<path d="M2 2h14v1H2zM2 6h14v2H2zM2 11h14v3H2z" />),
  vscale: glyph(<><text x="6" y="14" fontSize="18">T</text><path d="M2.500 3v10" stroke={c.icon} /><path d="M0 4 2.500 1 5 4zM0 12l2.500 3L5 12z" /></>),
  hscale: glyph(<><text x="3" y="12" fontSize="16">T</text><path d="M2 14.500h13" stroke={c.icon} /><path d="M3.500 12v5L0 14.500zM13.500 12v5l3.500-2.500z" /></>),
  baseline: glyph(<g fontFamily="Lato" fontWeight="400"><text x="0" y="13" fontSize="13">A</text><text x="9" y="9" fontSize="10">a</text><path d="M0 14.500h8M9 10.500h6M12 12v4" stroke={c.icon} /><path d="M9.500 13.500 12 10.500l2.500 3z" /></g>),
  tsume: glyph(<><text x="4" y="11" fontSize="10" fontFamily="Noto Sans CJK JP">あ</text><path d="M2 1v11M15 1v11" stroke={c.icon} strokeDasharray="1 1" /><path d="M1 14.500h5M11 14.500h5" stroke={c.icon} /></>),
};

const CharField = ({ icon, value, unit, off, wide }: { icon: React.ReactNode; value: string; unit?: string; off?: boolean; wide?: boolean }) => (
  <Field $wide={wide}>
    {icon}
    <span><Value $off={off}>{value}</Value>{unit}</span>
    <IconButton $w={12} $h={12} $color="#7c7c7c" aria-label="Options"><Icon name="triangle" size={8} /></IconButton>
  </Field>
);

const Character = () => (
  <CharBody>
    <FontRow>
      <FontSelects>
        <Select label="Font family" value="Trebuchet MS" dark pad={6} />
        <Select label="Font style" value="Bold" dark pad={6} />
      </FontSelects>
      <PaintColumn>
        <IconButton $w={18} aria-label="Eyedropper"><Icon name="dropper" /></IconButton>
        <Mono />
      </PaintColumn>
      <svg width="42" height="40" viewBox="0 0 42 40" aria-label="Fill and stroke colours">
        <path d="M2 28h11v11H2z" fill="#fff" />
        <path d="M2 39 13 28" stroke="#d01c1c" />
        <path fillRule="evenodd" d="M14 13h26v26H14zM22 21v9h10v-9z" fill="#fff" stroke="#111" />
        <path d="M14 39 40 13" stroke="#d01c1c" strokeWidth="2" />
        <path d="M1 0h28v28H1z" fill="#fff" stroke="#111" />
        <g transform="translate(29 1) scale(.75)" color={c.icon} fill={c.icon}>{icons.swap}</g>
      </svg>
    </FontRow>
    <CharGroup>
      <CharRow><CharField icon={charIcons.size} value="84" unit="px" /><CharField wide icon={charIcons.leading} value="59" unit="px" /></CharRow>
      <CharRow><CharField icon={charIcons.kern} value="Metrics" off /><CharField wide icon={charIcons.track} value="0" /></CharRow>
    </CharGroup>
    <CharGroup>
      <CharRow><CharField icon={charIcons.stroke} value="-" unit="px" /><Select label="Stroke order" value="" w={107} dark /></CharRow>
    </CharGroup>
    <CharGroup>
      <CharRow><CharField icon={charIcons.vscale} value="100" unit="%" /><CharField wide icon={charIcons.hscale} value="100" unit="%" /></CharRow>
      <CharRow><CharField icon={charIcons.baseline} value="0" unit="px" /><CharField wide icon={charIcons.tsume} value="0" unit="%" /></CharRow>
    </CharGroup>
    <StyleRow>
      <StyleButton $on $b>T</StyleButton>
      <StyleButton $i>T</StyleButton>
      <StyleButton $on $ml={4}>TT</StyleButton>
      <StyleButton>T<small>T</small></StyleButton>
      <StyleButton $ml={4}>T<sup>1</sup></StyleButton>
      <StyleButton>T<sub>1</sub></StyleButton>
    </StyleRow>
    <CheckRow>
      <Check><input type="checkbox" />Ligatures</Check>
      <Check><span><input type="checkbox" defaultChecked /><Icon name="tick" size={9} /></span>Hindi Digits</Check>
    </CheckRow>
  </CharBody>
);

/* ---------- timeline ---------- */

const TimelinePanel = styled.section`
  background: ${c.panel};
  border: 1px solid #2f6fb4;
  border-top: 2px solid #3c566e;
  margin: 0 1px 1px;
`;

const TimelineBody = styled.div`
  display: flex;
`;

const LayersPane = styled.div`
  width: 474px;
  flex: none;
`;

const TimeHead = styled.div`
  display: flex;
  align-items: center;
  height: 33px;
  padding-bottom: 2px;
`;

const TimeCode = styled.div`
  width: 99px;
  text-align: center;
  color: #1d5387;
  line-height: 12px;
  padding-right: 2px;
  strong { display: block; color: ${c.blue}; font-size: 14px; line-height: 16px; }
`;

const HeadIcons = styled.div`
  display: flex;
  padding-left: 7px;
`;

const LayerArea = styled.div`
  display: grid;
  grid-template-columns: 459px 15px;
`;

const LayerTable = styled.table`
  display: block;
  thead { display: block; }
  tbody {
    display: flex;
    flex-direction: column;
    justify-content: flex-end;
    height: 153px;
    overflow: hidden;
  }
`;

const LayerRow = styled.tr<{ $kind: "head" | "layer" | "prop"; $sel?: boolean }>`
  display: grid;
  grid-template-columns: 17px 14px 14px 14px 36px 30px 120px 1fr;
  align-items: center;
  flex: none;
  height: ${(p) => (p.$kind === "head" ? 18 : 16)}px;
  background: ${(p) => (p.$kind === "head" ? "#313131" : p.$kind === "prop" ? "#262626" : p.$sel ? "#4a4a4a" : "#303030")};
  border-top: 1px solid ${(p) => (p.$kind === "head" ? c.line : "#1f1f1f")};
  font-size: ${(p) => (p.$kind === "head" ? 9 : 10)}px;
  th, td { display: flex; align-items: center; height: 15px; }
`;

const Slot = styled.td<{ $box?: boolean }>`
  justify-content: center;
  color: ${c.icon};
  background: ${(p) => (p.$box ? "rgba(0,0,0,.14)" : "none")};
  box-shadow: inset -1px 0 0 ${(p) => (p.$box ? "rgba(0,0,0,.15)" : "transparent")};
`;

const LabelSlot = styled.td`
  gap: 3px;
  padding-left: 9px;
`;

const NumSlot = styled.td`
  padding-left: 5px;
  font-weight: 600;
`;

const HeadSlot = styled.th<{ $pad?: number; $line?: boolean }>`
  color: ${c.text};
  padding-left: ${(p) => p.$pad ?? 0}px;
  border-left: ${(p) => (p.$line ? "1px solid #151515" : "0")};
  gap: 10px;
  justify-content: ${(p) => (p.$pad === undefined ? "center" : "flex-start")};
`;

const SwitchHead = styled.th`
  padding-left: 4px;
  border-left: 1px solid #151515;
  > span { width: 14px; display: flex; justify-content: center; color: ${c.text}; }
`;

const NameSlot = styled.td`
  gap: 5px;
  color: ${c.icon};
`;

const LayerName = styled.span<{ $edit?: boolean; $sel?: boolean; $pad?: number }>`
  flex: 1;
  height: 15px;
  line-height: 15px;
  padding-left: ${(p) => p.$pad ?? 3}px;
  color: #b4b4b4;
  background: ${(p) => (p.$sel ? "#484848" : "none")};
  box-shadow: ${(p) => (p.$edit ? "inset 0 0 0 1px #b5b5b5" : "none")};
  b { font-weight: 600; }
`;

const TypeMark = styled.b`
  width: 12px;
  text-align: center;
  font: 700 14px/15px "Liberation Serif", serif;
`;

const Switches = styled.td`
  padding-left: 5px;
  > span { width: 14px; height: 15px; display: flex; align-items: center; justify-content: center; color: ${c.icon}; }
`;

const SwitchBox = styled.span<{ $box?: boolean }>`
  background: ${(p) => (p.$box ? "rgba(0,0,0,.16)" : "none")};
  box-shadow: inset -1px 0 0 ${(p) => (p.$box ? "rgba(0,0,0,.2)" : "transparent")};
`;

const PropValue = styled.td`
  padding-left: 6px;
  color: ${c.value};
`;

const Dim = styled.span<{ $off?: boolean; $on?: boolean }>`
  color: ${(p) => (p.$on ? c.blue : p.$off ? "#555" : c.icon)};
`;

const PropName = styled.td`
  grid-column: 6 / span 2;
  padding-left: 17px;
  gap: 4px;
  color: ${c.icon};
`;

const switchNames = ["shy", "sun", "quality", "fx", "film", "motion", "adjust", "cube"];

const Layer = ({ n, name, locked, sel, solid }: { n: number; name: string; locked?: boolean; sel?: boolean; solid?: boolean }) => (
  <LayerRow $kind="layer" $sel={sel}>
    <Slot><Icon name="eye" size={10} /></Slot>
    <td />
    <Slot $box />
    <Slot $box>{locked && <Icon name="lock" size={12} />}</Slot>
    <LabelSlot>
      <Icon name={solid ? "right" : "chevron"} size={8} />
      <Swatch $color={c.red} $size={12} />
    </LabelSlot>
    <NumSlot>{n}</NumSlot>
    <NameSlot>
      {solid ? <Swatch $color={c.teal} $size={12} /> : <TypeMark>T</TypeMark>}
      <LayerName $edit={sel}>{solid ? <b>{name}</b> : name}</LayerName>
    </NameSlot>
    <Switches>
      <span><Icon name="shy" size={12} /></span>
      <SwitchBox $box={solid}>{!solid && <Icon name="sun" size={9} />}</SwitchBox>
      <SwitchBox $box><Icon name="slash" size={11} /></SwitchBox>
      <span />
      <span />
      <SwitchBox $box={solid}>{!solid && <Icon name="motion" size={13} />}</SwitchBox>
      <SwitchBox $box />
      <SwitchBox $box />
    </Switches>
  </LayerRow>
);

const Prop = ({ value, on, sel }: { value: string; on?: boolean; sel?: boolean }) => (
  <LayerRow $kind="prop">
    <Slot><Dim $off={!sel}><Icon name="prev" size={8} /></Dim></Slot>
    <Slot><Dim $on={on}><Icon name={on ? "keyOn" : "key"} size={8} /></Dim></Slot>
    <Slot><Dim $off={sel}><Icon name="next" size={8} /></Dim></Slot>
    <td />
    <td />
    <PropName>
      <Dim $on><Icon name="watch" size={13} /></Dim>
      <Icon name="plot" size={12} />
      <LayerName $sel={sel} $pad={4}>Position</LayerName>
    </PropName>
    <PropValue>{value}</PropValue>
  </LayerRow>
);

const BottomBar = styled.footer`
  display: flex;
  align-items: center;
  height: 17px;
  border-top: 1px solid ${c.line};
  padding-left: 2px;
`;

const ToggleModes = styled.button`
  width: 210px;
  height: 15px;
  margin-left: 194px;
  background: #1f1f1f;
  border: 1px solid #2d2d2d;
  text-align: center;
  line-height: 13px;
`;

const Zoomer = styled.label`
  display: flex;
  align-items: center;
  gap: 11px;
  width: 101px;
  height: 17px;
  padding-left: 4px;
  border-top: 1px solid ${c.line};
  color: ${c.icon};
  input { appearance: none; width: 46px; height: 2px; background: #4a4a4a; }
  input::-webkit-slider-thumb { appearance: none; width: 10px; height: 10px; border: 2px solid ${c.icon}; border-radius: 50%; background: ${c.panel}; }
`;

const ChartPane = styled.div`
  flex: 1;
  min-width: 0;
  display: flex;
  flex-direction: column;
  justify-content: space-between;
`;

const Chart = styled.svg`
  width: 100%;
  fill: ${c.text};
`;

const GraphTools = styled.div`
  display: flex;
  align-items: center;
  height: 29px;
  padding: 7px 0 0 169px;
`;

const ToolSet = styled.div<{ $ml?: number }>`
  display: flex;
  margin-left: ${(p) => p.$ml ?? 0}px;
`;

const second = 51.5;
const start = 483;
const seconds = Array.from({ length: 16 }, (_, i) => i);

const SpeedGraph = () => (
  <Chart viewBox="476 498 802 175" aria-label="Speed graph">
    <path d="M476 503.500H1262M476 512.500H1262M476 529.500H1010M476 545H1262" stroke={c.line} />
    <path d="M483 504h774v8H483z" fill="#6b6b6b" />
    <path d="M476.500 508q0-4 5-4v8q-5 0-5-4zM1257 504q5 0 5 4t-5 4z" fill={c.blue} />
    <path d="M483 530h527v15H483z" fill="#626262" />
    <path d="M482 530v15h-2q-3 0-3-3v-9q0-3 3-3zM1010 530v15h2q3 0 3-3v-9q0-3-3-3z" fill={c.blue} />
    <path d="M476 549.500H1278" stroke={c.line} strokeWidth="2" />
    <path d="M483 546h747v3H483z" fill="#25c13b" />
    <path d="M476 550h786v122H476z" fill="#272727" />
    <path d="M483 550h527v122H483z" fill="#333" />
    {seconds.map((i) => (
      <g key={i}>
        <path d={`M${Math.round(start + i * second)}.500 550v122`} stroke={i > 10 ? "#1e1e1e" : "#1b1b1b"} />
        <path d={`M${Math.round(start + i * second)}.500 525v${i > 10 ? 10 : 4}`} stroke="#8a8a8a" />
        <text x={start + i * second} y="523" textAnchor="middle">{i === 0 ? "0:00s" : `${String(i).padStart(2, "0")}s`}</text>
      </g>
    ))}
    <path d="M476 591.500H1262M1262.500 550V700" stroke="#1b1b1b" />
    <path d="M476 664.500H1262" stroke="#b8b8b8" strokeDasharray="3 2" />
    <path d="M483 664.500H577" stroke="#262626" />
    <text x="485" y="589">5000 px/sec</text>
    <text x="484" y="661">0</text>
    <path
      d="M483 664.500C505 656 517 630 521 603C523 588 524 565 526 556C528 565 528.500 600 529.500 625C530.500 648 531 660 532.500 664.500C548 664 560 662 563.500 647C566 634 566.500 618 568.500 611.500C570.500 620 573 632 575.500 638.500L576.500 664"
      fill="none"
      stroke="#d2d2d2"
      strokeWidth="1.700"
    />
    <path d="M481 662.500h4v4h-4zM530.500 662.500h4v4h-4zM573.500 636.500h4v4h-4z" fill="#fff" />
    <path d="M577.500 504v168" stroke="#4795d8" strokeWidth="1.300" />
    <path d="M572 516.500h11v6l-5.500 5.500-5.500-5.500z" fill={c.blue} />
    <path d="M577.500 522v6" stroke="#14395e" />
    <svg x="1265" y="533" width="12" height="12" viewBox="0 0 16 16" fill={c.icon}>{icons.flag}</svg>
    <svg x="1263" y="552" width="13" height="13" viewBox="0 0 16 16" fill={c.icon} color={c.icon}>{icons.bin}</svg>
  </Chart>
);

const Timeline = () => (
  <TimelinePanel>
    <TabRow $h={25}>
      <Tab $ml={14}>Render Queue</Tab>
      <Tab $on $ml={36} $gap={10}><span>×</span><Swatch $color={c.tan} />Menoski<Icon name="menu" size={10} /></Tab>
    </TabRow>
    <TimelineBody>
      <LayersPane>
        <TimeHead>
          <TimeCode><strong>0;00;01;25</strong>00055 (29.97 fps)</TimeCode>
          <SearchField $w="186px"><Icon name="find" /><input aria-label="Search layers" /></SearchField>
          <HeadIcons>
            <IconButton $w={30} aria-label="Mini-flowchart"><Icon name="flow" size={15} /></IconButton>
            <IconButton $w={33} aria-label="Draft 3D"><Icon name="draft" /></IconButton>
            <IconButton $w={30} aria-label="Hide shy layers"><Icon name="shyMaster" size={14} /></IconButton>
            <IconButton $w={20} aria-label="Frame blending"><Icon name="blend" size={14} /></IconButton>
            <IconButton $w={28} $color={c.value} aria-label="Motion blur"><Icon name="motion" size={14} /></IconButton>
            <IconButton $w={36} $color={c.value} aria-label="Graph editor"><Icon name="graph" size={15} /></IconButton>
          </HeadIcons>
        </TimeHead>
        <LayerArea>
          <LayerTable>
            <thead>
              <LayerRow $kind="head">
                <HeadSlot><Icon name="eye" size={10} /></HeadSlot>
                <HeadSlot><Icon name="audio" size={11} /></HeadSlot>
                <HeadSlot><Icon name="solo" size={11} /></HeadSlot>
                <HeadSlot><Icon name="lock" size={12} /></HeadSlot>
                <HeadSlot $pad={16}><Icon name="tag" size={12} /></HeadSlot>
                <HeadSlot $pad={2} $line><span>#</span><span>.</span></HeadSlot>
                <HeadSlot $pad={4} $line>Source Name</HeadSlot>
                <SwitchHead>{switchNames.map((n) => <span key={n}><Icon name={n} size={12} /></span>)}</SwitchHead>
              </LayerRow>
            </thead>
            <tbody>
              <Prop value="1511.6 ,362.1" />
              <Layer n={4} name="0" />
              <Prop value="655.2 ,-77.1" />
              <Layer n={5} name="n" locked />
              <Prop value="-40.1 ,324.1" />
              <Layer n={6} name="e" locked />
              <Prop value="107.6 ,-41.2" on />
              <Layer n={7} name="m" sel />
              <Prop value="433.7 ,360.0" sel />
              <Layer n={8} name="Background" solid />
            </tbody>
          </LayerTable>
          <ScrollTrack $w={15}><Thumbbar $top="74px" $h="96px" /></ScrollTrack>
        </LayerArea>
        <BottomBar>
          <IconButton $w={17} $color={c.blue} aria-label="Toggle switches"><Icon name="toggleA" size={11} /></IconButton>
          <IconButton $w={17} aria-label="Toggle modes"><Icon name="toggleB" size={11} /></IconButton>
          <IconButton $w={17} aria-label="Toggle in and out"><Icon name="toggleC" size={11} /></IconButton>
          <ToggleModes>Toggle Switches / Modes</ToggleModes>
        </BottomBar>
      </LayersPane>
      <ChartPane>
        <SpeedGraph />
        <GraphTools>
          <ToolSet>
            <IconButton $w={24} aria-label="Show properties"><Icon name="eyeDrop" /></IconButton>
            <IconButton $w={23} aria-label="Graph type"><Icon name="list" size={15} /></IconButton>
            <IconButton $w={23} $h={20} $on $color={c.blue} aria-label="Transform box"><Icon name="box" size={15} /></IconButton>
            <IconButton $w={23} $h={20} $on $color={c.blue} aria-label="Snap"><Icon name="magnet" size={15} /></IconButton>
          </ToolSet>
          <ToolSet $ml={23}>
            <IconButton $w={23} $h={20} $on $color={c.blue} aria-label="Auto-zoom"><Icon name="fit" /></IconButton>
            <IconButton $w={24} $color="#404040" aria-label="Fit selection"><Icon name="fitSel" size={15} /></IconButton>
            <IconButton $w={24} aria-label="Fit all"><Icon name="zoomFit" size={16} /></IconButton>
          </ToolSet>
          <ToolSet $ml={24}>
            <IconButton $w={23} aria-label="Separate dimensions"><Icon name="separate" size={17} /></IconButton>
          </ToolSet>
          <ToolSet $ml={25}>
            {["keyMenu", "hold", "linear", "bezier"].map((n) => (
              <IconButton key={n} $w={23} $color="#3a3a3a" aria-label={n}><Icon name={n} size={15} /></IconButton>
            ))}
          </ToolSet>
          <ToolSet $ml={24}>
            {["ease", "easeIn", "easeOut"].map((n) => (
              <IconButton key={n} $w={23} $color="#3a3a3a" aria-label={n}><Icon name={n} /></IconButton>
            ))}
          </ToolSet>
        </GraphTools>
        <Zoomer>
          <Icon name="hillS" size={9} />
          <input type="range" min={0} max={100} defaultValue={0} aria-label="Time zoom" />
          <Icon name="hillL" size={13} />
        </Zoomer>
      </ChartPane>
    </TimelineBody>
  </TimelinePanel>
);

export default function App() {
  return (
    <Page>
      <GlobalStyle />
      <Chrome>
        <TitleBar>
          <Logo>Ae</Logo>
          <h1>Adobe After Effects CC 2019 - C:\Users\Menoski\Videos\Projects\Menoksi Animation (01).aep *</h1>
          <WindowButtons>
            <WindowButton aria-label="Minimize"><svg width="10" height="10"><path d="M0 5.500h10" stroke="#333" /></svg></WindowButton>
            <WindowButton aria-label="Restore"><svg width="11" height="11" fill="none" stroke="#111"><path d="M.5 3.500h7v7h-7zM3 3V.5h7.500V8H8" /></svg></WindowButton>
            <WindowButton aria-label="Close"><svg width="10" height="10"><path d="m0 0 10 10M10 0 0 10" stroke="#111" /></svg></WindowButton>
          </WindowButtons>
        </TitleBar>
        <MenuBar>
          {["File", "Edit", "Composition", "Layer", "Effect", "Animation", "View", "Window", "Help"].map((m) => <button key={m}>{m}</button>)}
        </MenuBar>
      </Chrome>
      <Tools />
      <Main>
        <Project />
        <Composition />
        <Side>
          <SideBody>
            <SideTitle>Info</SideTitle>
            <SideTitle $on>Character<Icon name="menu" size={10} /></SideTitle>
            <Character />
            {["Preview", "Effects & Presets", "Align", "Libraries"].map((t) => <SideTitle key={t}>{t}</SideTitle>)}
          </SideBody>
          <ScrollTrack $w={12}><Thumbbar $h="88%" /></ScrollTrack>
        </Side>
      </Main>
      <Timeline />
    </Page>
  );
}
